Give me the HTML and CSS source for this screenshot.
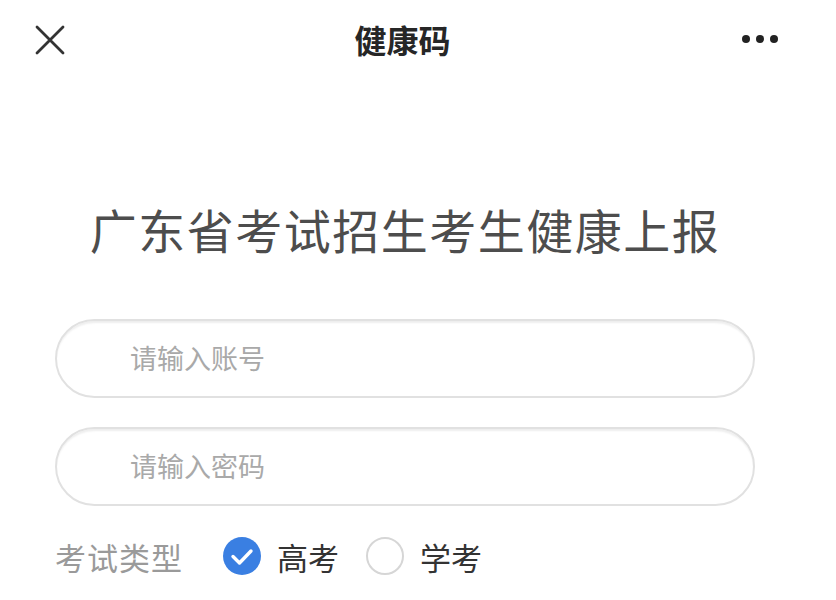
FILE: index.html
```html
<!DOCTYPE html>
<html lang="zh-CN">
<head>
<meta charset="utf-8">
<title>健康码</title>
<link rel="stylesheet" href="styles.css">
</head>
<body>
<header class="topbar">
  <div class="topbar-left">
    <svg class="icon-close" width="30" height="30" viewBox="0 0 30 30" aria-hidden="true">
      <path d="M2 2 L28 28 M28 2 L2 28" stroke="#333" stroke-width="2.8" stroke-linecap="round" fill="none"/>
    </svg>
  </div>
  <div class="topbar-title">健康码</div>
  <div class="topbar-right">
    <span class="dot"></span><span class="dot"></span><span class="dot"></span>
  </div>
</header>
<main class="content">
  <h1 class="heading">广东省考试招生考生健康上报</h1>
  <div class="field"><span class="placeholder">请输入账号</span></div>
  <div class="field"><span class="placeholder">请输入密码</span></div>
  <div class="type-row">
    <span class="type-label">考试类型</span>
    <span class="radio radio-on">
      <svg width="38" height="38" viewBox="0 0 38 38" aria-hidden="true">
        <path d="M10 19.5 L16.5 26 L28 14" stroke="#fff" stroke-width="3.4" stroke-linecap="round" stroke-linejoin="round" fill="none"/>
      </svg>
    </span>
    <span class="radio-text">高考</span>
    <span class="radio radio-off"></span>
    <span class="radio-text">学考</span>
  </div>
</main>
</body>
</html>
```

FILE: styles.css
```css
html, body {
  margin: 0;
  padding: 0;
  background: #ffffff;
}
body {
  font-family: "Noto Sans CJK SC", "Noto Sans", sans-serif;
  color: #333;
}
.topbar {
  display: grid;
  grid-template-columns: 1fr auto 1fr;
  align-items: center;
  height: 78px;
  padding: 0 58px 0 35px;
}
.topbar-left {
  display: flex;
  align-items: center;
}
.icon-close {
  display: block;
  margin-top: 1px;
}
.topbar-title {
  font-size: 32px;
  font-weight: 700;
  color: #262626;
  line-height: 1;
  margin: 0 8px 0 0;
}
.topbar-right {
  display: flex;
  justify-content: flex-end;
  align-items: center;
  gap: 6px;
}
.dot {
  width: 8px;
  height: 8px;
  border-radius: 50%;
  background: #222;
}
.content {
  padding: 0 81px 0 55px;
}
.heading {
  margin: 118px 0 0;
  text-align: center;
  font-size: 47px;
  font-weight: 400;
  line-height: 66px;
  color: #4d4d4d;
  letter-spacing: 1.5px;
}
.field {
  height: 75px;
  border: 2px solid #e1e1e1;
  border-radius: 40px;
  box-shadow: inset 0 3px 2px -1px rgba(0,0,0,0.07);
  display: flex;
  align-items: center;
  padding-left: 73px;
  margin-top: 57px;
}
.field + .field {
  margin-top: 29px;
}
.placeholder {
  font-size: 27px;
  color: #a9a9a9;
  line-height: 1;
  margin-top: -2px;
}
.type-row {
  display: flex;
  align-items: center;
  margin-top: 30px;
  height: 40px;
}
.type-label {
  font-size: 31px;
  color: #9a9a9a;
  margin-right: 40px;
  letter-spacing: 1px;
}
.radio {
  width: 38px;
  height: 38px;
  border-radius: 50%;
  box-sizing: border-box;
  flex: none;
}
.radio svg {
  display: block;
}
.radio-on {
  background: #3a7fe2;
}
.radio-off {
  border: 2px solid #d6d6d6;
  margin-left: 27px;
}
.radio-text {
  font-size: 31px;
  color: #333;
  margin-left: 16px;
}
```
